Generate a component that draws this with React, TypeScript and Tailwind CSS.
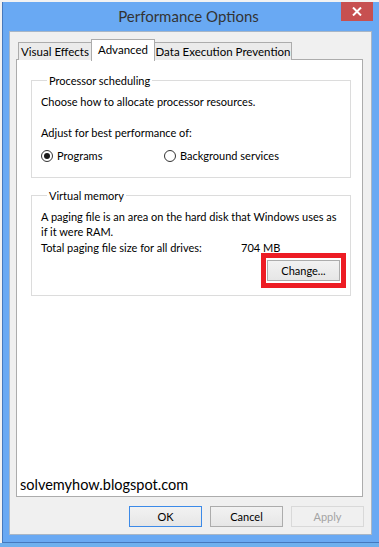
import React from "react";

const font = { fontFamily: 'Lato, "Noto Sans", sans-serif' };

function Radio({ checked, label, className }: { checked?: boolean; label: string; className?: string }) {
    return (
        <div className={"flex items-center " + (className || "")}>
            <span className="w-[12px] h-[12px] rounded-full border border-[#333] bg-white flex items-center justify-center">
                {checked && <span className="w-[6px] h-[6px] rounded-full bg-[#1a1a1a]" />}
            </span>
            <span className="ml-[4px]">{label}</span>
        </div>
    );
}

function WinButton({ label, variant }: { label: string; variant?: "default" | "disabled" }) {
    const base = "w-[73px] h-[21px] flex items-center justify-center border";
    if (variant === "default") {
        return <div className={base + " border-[#3c8ae8] bg-gradient-to-b from-[#f2f2f2] to-[#e6e6e6] text-black"}>{label}</div>;
    }
    if (variant === "disabled") {
        return <div className={base + " border-[#d9d9d9] bg-[#f0f0f0] text-[#a3a3a3]"}>{label}</div>;
    }
    return <div className={base + " border-[#acacac] bg-gradient-to-b from-[#f2f2f2] to-[#e6e6e6] text-black"}>{label}</div>;
}

export default function App() {
    return (
        <div className="w-[379px] h-[547px] overflow-hidden bg-[#6fb0ee] text-[11px] leading-[15px] text-black" style={font}>
            <div className="pl-[2px] pt-[2px] bg-[#f2f2f2] w-[379px]">
                {/* Window frame */}
                <div className="relative w-[380px] h-[541px] bg-[#69a9f3] border-l border-b border-[#4679bd]">
                    {/* Title bar */}
                    <div className="h-[29px] flex items-center justify-center pr-[8px]">
                        <span className="text-[15px] text-[#333]">Performance Options</span>
                    </div>
                    <div className="absolute top-0 left-[338px] w-[32px] h-[19px] bg-[#c75050] flex items-center justify-center">
                        <svg width="10" height="9" viewBox="0 0 10 9">
                            <path d="M1 0.5 L9 8.5 M9 0.5 L1 8.5" stroke="white" strokeWidth="2" />
                        </svg>
                    </div>

                    {/* Client area */}
                    <div className="ml-[6px] w-[363px] h-[504px] bg-[#f0f0f0] border border-[#a8b6c6] px-[6px] pt-[7px] flex flex-col">
                        {/* Tabs */}
                        <div className="flex items-end h-[21px] pl-[2px] relative z-10 whitespace-nowrap text-[11.5px]">
                            <div className="w-[74px] h-[18px] border border-b-0 border-[#acacac] bg-[#ebebeb] flex items-center justify-center">
                                Visual Effects
                            </div>
                            <div className="w-[64px] h-[22px] -ml-px -mb-px border border-b-0 border-[#acacac] bg-white flex items-start justify-center pt-[2px]">
                                Advanced
                            </div>
                            <div className="w-[138px] h-[18px] -ml-px border border-b-0 border-[#acacac] bg-[#ebebeb] flex items-center justify-center">
                                Data Execution Prevention
                            </div>
                        </div>

                        {/* Tab panel */}
                        <div className="w-[347px] h-[438px] -mt-px border border-[#acacac] bg-white flex flex-col pl-[14px] pr-[11px] pt-[13px]">
                            <fieldset className="min-w-0 border border-[#dcdcdc] h-[105px] px-[9px]">
                                <legend className="ml-[6px] px-[2px]">Processor scheduling</legend>
                                <div className="mt-[6px]">Choose how to allocate processor resources.</div>
                                <div className="mt-[16px]">Adjust for best performance of:</div>
                                <div className="flex mt-[8px]">
                                    <Radio checked label="Programs" className="w-[123px]" />
                                    <Radio label="Background services" />
                                </div>
                            </fieldset>

                            <fieldset className="min-w-0 border border-[#dcdcdc] h-[108px] px-[9px] mt-[10px]">
                                <legend className="ml-[6px] px-[2px]">Virtual memory</legend>
                                <div className="mt-[6px] whitespace-nowrap">
                                    <div>A paging file is an area on the hard disk that Windows uses as</div>
                                    <div>if it were RAM.</div>
                                </div>
                                <div className="flex mt-[1px]">
                                    <span className="w-[200px]">Total paging file size for all drives:</span>
                                    <span>704 MB</span>
                                </div>
                                <div className="flex justify-end -mt-[2px] -mr-[5px]">
                                    <div className="border-[5px] border-[#ed1c24] px-px py-[2px]">
                                        <WinButton label="Change..." />
                                    </div>
                                </div>
                            </fieldset>

                            <div className="mt-auto mb-[1px] -ml-[11px] text-[14.5px] leading-[20px]">solvemyhow.blogspot.com</div>
                        </div>

                        {/* Dialog buttons */}
                        <div className="flex justify-end gap-[8px] mt-[9px] pr-px">
                            <WinButton label="OK" variant="default" />
                            <WinButton label="Cancel" />
                            <WinButton label="Apply" variant="disabled" />
                        </div>
                    </div>
                </div>
            </div>
        </div>
    );
}
